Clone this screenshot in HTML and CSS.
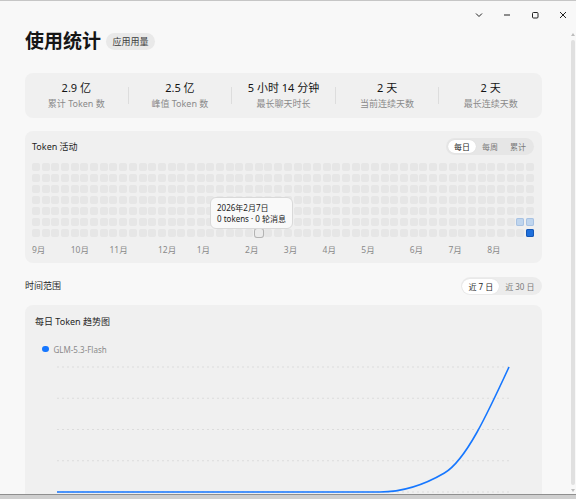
FILE: index.html
```html
<!DOCTYPE html>
<html lang="zh-CN">
<head>
<meta charset="utf-8">
<title>使用统计</title>
<link rel="stylesheet" href="styles.css">
</head>
<body>
<div class="window">
  <div class="titlebar">
    <span class="tb-btn"><svg viewBox="0 0 10 10"><polyline points="2,3.5 5,6.5 8,3.5"/></svg></span>
    <span class="tb-btn"><svg viewBox="0 0 10 10"><line x1="2" y1="5" x2="8" y2="5"/></svg></span>
    <span class="tb-btn"><svg viewBox="0 0 10 10"><rect x="2.5" y="2.5" width="5.5" height="5.5" rx="1"/></svg></span>
    <span class="tb-btn"><svg viewBox="0 0 10 10"><line x1="2" y1="2" x2="8" y2="8"/><line x1="8" y1="2" x2="2" y2="8"/></svg></span>
  </div>
  <div class="win-body">
    <main class="content">
      <header class="page-head">
        <h1 class="page-title">使用统计</h1>
        <span class="badge">应用用量</span>
      </header>

      <section class="stats">
        <div class="stat"><div class="stat-value">2.9 亿</div><div class="stat-label">累计 Token 数</div></div>
        <div class="stat-divider"></div>
        <div class="stat"><div class="stat-value">2.5 亿</div><div class="stat-label">峰值 Token 数</div></div>
        <div class="stat-divider"></div>
        <div class="stat"><div class="stat-value">5 小时 14 分钟</div><div class="stat-label">最长聊天时长</div></div>
        <div class="stat-divider"></div>
        <div class="stat"><div class="stat-value">2 天</div><div class="stat-label">当前连续天数</div></div>
        <div class="stat-divider"></div>
        <div class="stat"><div class="stat-value">2 天</div><div class="stat-label">最长连续天数</div></div>
      </section>

      <section class="card activity">
        <div class="card-head">
          <h2 class="card-title">Token 活动</h2>
          <div class="seg">
            <span class="seg-item active">每日</span>
            <span class="seg-item">每周</span>
            <span class="seg-item">累计</span>
          </div>
        </div>
        <div class="heatmap-wrap">
          <div class="heatmap" id="heatmap"></div>
          <div class="tooltip">
            <div>2026年2月7日</div>
            <div>0 tokens · 0 轮消息</div>
          </div>
        </div>
        <div class="months">
          <span style="grid-column:1">9月</span>
          <span style="grid-column:5">10月</span>
          <span style="grid-column:9">11月</span>
          <span style="grid-column:14">12月</span>
          <span style="grid-column:18">1月</span>
          <span style="grid-column:23">2月</span>
          <span style="grid-column:27">3月</span>
          <span style="grid-column:31">4月</span>
          <span style="grid-column:35">5月</span>
          <span style="grid-column:40">6月</span>
          <span style="grid-column:44">7月</span>
          <span style="grid-column:48">8月</span>
        </div>
      </section>

      <div class="range-row">
        <span class="range-label">时间范围</span>
        <div class="seg seg-range">
          <span class="seg-item active">近 7 日</span>
          <span class="seg-item">近 30 日</span>
        </div>
      </div>

      <section class="card chart-card">
        <h2 class="chart-title">每日 Token 趋势图</h2>
        <div class="legend"><span class="legend-dot"></span><span>GLM-5.3-Flash</span></div>
        <svg class="chart" viewBox="0 0 517 140" width="517" height="140">
          <g class="grid-lines">
            <line x1="32" y1="7" x2="484" y2="7"/>
            <line x1="32" y1="38.25" x2="484" y2="38.25"/>
            <line x1="32" y1="69.5" x2="484" y2="69.5"/>
            <line x1="32" y1="100.75" x2="484" y2="100.75"/>
            <line x1="32" y1="132" x2="484" y2="132"/>
          </g>
          <path class="series" d="M32 132 L354.86 132 C376.38 132 397.91 125.67 419.43 113 C440.95 100.33 462.48 53.66 484 7"/>
        </svg>
      </section>
    </main>
    <div class="scrollbar">
      <span class="sb-arrow sb-up"></span>
      <span class="sb-thumb"></span>
      <span class="sb-arrow sb-down"></span>
    </div>
  </div>
</div>
<script src="script.js"></script>
</body>
</html>
```

FILE: styles.css
```css
* { box-sizing: border-box; margin: 0; padding: 0; }

html, body {
  width: 576px;
  height: 499px;
  overflow: hidden;
}

body {
  background: #cfcfcf;
  font-family: "Noto Sans", "Noto Sans CJK SC", sans-serif;
  color: #1f1f1f;
}

.window {
  height: 495px;
  background: #f8f8f8;
  border-top: 1px solid #c6c6c6;
  border-bottom: 1px solid #8f8f8f;
  display: flex;
  flex-direction: column;
  overflow: hidden;
}

.titlebar {
  height: 28px;
  flex: none;
  display: flex;
  justify-content: flex-end;
  margin-right: -1px;
}

.tb-btn {
  width: 28px;
  height: 28px;
  display: flex;
  align-items: center;
  justify-content: center;
}

.tb-btn svg {
  width: 10px;
  height: 10px;
  fill: none;
  stroke: #222;
  stroke-width: 1;
}

.win-body {
  flex: 1;
  min-height: 0;
  display: flex;
}

.content {
  flex: 1;
  min-width: 0;
  padding: 0 28px 0 25px;
  overflow: hidden;
}

/* header */
.page-head {
  height: 24px;
  display: flex;
  align-items: center;
  gap: 5px;
}

.page-title {
  font-size: 19px;
  line-height: 24px;
  font-weight: 700;
  color: #161616;
}

.badge {
  height: 17px;
  line-height: 17px;
  padding: 0 6.5px;
  border-radius: 9px;
  background: #e9e9e9;
  font-size: 9px;
  color: #3a3a3a;
}

/* stats */
.stats {
  margin-top: 20px;
  height: 45px;
  background: #f0f0f0;
  border-radius: 8px;
  display: flex;
}

.stat {
  flex: 1;
  display: flex;
  flex-direction: column;
  align-items: center;
  padding-top: 8px;
}

.stat-value {
  font-size: 11px;
  line-height: 14px;
  font-weight: 400;
  color: #141414;
  white-space: nowrap;
}

.stat-label {
  margin-top: 3px;
  font-size: 9px;
  line-height: 12px;
  color: #8a8a8a;
  white-space: nowrap;
}

.stat-divider {
  width: 1px;
  height: 17px;
  align-self: center;
  background: #dddddd;
}

/* cards */
.card {
  background: #f0f0f0;
  border-radius: 8px;
}

.activity {
  margin-top: 13px;
  padding: 7px 8px 8px 7px;
}

.card-head {
  height: 17px;
  display: flex;
  align-items: center;
  justify-content: space-between;
}

.card-title {
  font-size: 9px;
  line-height: 12px;
  font-weight: 400;
  color: #1f1f1f;
}

.seg {
  display: flex;
  padding: 2px;
  background: #e6e6e6;
  border-radius: 9px;
}

.seg-item {
  height: 13px;
  line-height: 13px;
  padding: 0 6px;
  font-size: 8px;
  color: #7a7a7a;
  border-radius: 7px;
  white-space: nowrap;
}

.seg-item.active {
  background: #ffffff;
  color: #1f1f1f;
  box-shadow: 0 0 1px rgba(0, 0, 0, 0.12);
}

.heatmap-wrap {
  margin-top: 8px;
  position: relative;
}

.heatmap {
  display: grid;
  grid-template-columns: repeat(52, minmax(0, 1fr));
  grid-template-rows: repeat(7, 8px);
  gap: 3px 1.7px;
  grid-auto-flow: column;
}

.cell {
  border-radius: 2px;
  background: #e6e6e6;
}

.cell.l1 {
  background: #bfd5ee;
  box-shadow: inset 0 0 0 1px #a8c2e2;
}

.cell.l4 {
  background: #1e6fdc;
  box-shadow: inset 0 0 0 1px #1557b4;
}

.cell.hover {
  background: #ebebeb;
  box-shadow: 0 0 0 1px #b3b3b3;
}

.tooltip {
  position: absolute;
  left: 178px;
  top: 34px;
  padding: 4px 6px;
  background: #f9f9f9;
  border: 1px solid #d9d9d9;
  border-radius: 6px;
  font-size: 8px;
  line-height: 11px;
  color: #222;
  white-space: nowrap;
}

.months {
  margin-top: 7px;
  height: 11px;
  display: grid;
  grid-template-columns: repeat(52, minmax(0, 1fr));
  column-gap: 1.7px;
  font-size: 8.5px;
  line-height: 11px;
  color: #8a8a8a;
}

.months span {
  white-space: nowrap;
}

/* range row */
.range-row {
  margin-top: 14px;
  height: 18px;
  display: flex;
  align-items: center;
  justify-content: space-between;
}

.range-label {
  font-size: 9px;
  line-height: 12px;
  color: #2a2a2a;
}

.seg-range {
  padding: 1.5px;
  height: 18px;
  background: #ececec;
}

.seg-range .seg-item {
  height: 15px;
  line-height: 15px;
  border-radius: 8px;
}

/* chart */
.chart-card {
  margin-top: 10px;
  height: 220px;
}

.chart-title {
  padding: 11px 10px 0;
  font-size: 9px;
  line-height: 12px;
  font-weight: 400;
  color: #1f1f1f;
}

.legend {
  margin-top: 16px;
  padding-left: 17px;
  height: 10px;
  display: flex;
  align-items: center;
  gap: 5px;
  font-size: 8px;
  color: #8a8a8a;
}

.legend-dot {
  width: 6.5px;
  height: 6.5px;
  border-radius: 50%;
  background: #1677ff;
}

.chart {
  display: block;
  margin-top: 6px;
}

.grid-lines line {
  stroke: #dcdcdc;
  stroke-width: 1;
  stroke-dasharray: 2 3;
}

.series {
  fill: none;
  stroke: #1677ff;
  stroke-width: 1.6;
}

/* scrollbar */
.scrollbar {
  width: 6px;
  flex: none;
  display: flex;
  flex-direction: column;
  align-items: center;
  padding: 4px 0 2px;
}

.sb-arrow {
  width: 0;
  height: 0;
  border-left: 2.5px solid transparent;
  border-right: 2.5px solid transparent;
}

.sb-up { border-bottom: 3px solid #bdbdbd; }
.sb-down { border-top: 3px solid #bdbdbd; }

.sb-thumb {
  flex: 1;
  width: 4px;
  margin: 4px 0;
  border-radius: 2px;
  background: #e0e0e0;
}
```

FILE: script.js
```js
(function () {
  var hm = document.getElementById('heatmap');
  var cols = 52, rows = 7;
  var marks = { '50-5': 'l1', '51-5': 'l1', '51-6': 'l4', '23-6': 'hover' };
  for (var c = 0; c < cols; c++) {
    for (var r = 0; r < rows; r++) {
      var d = document.createElement('div');
      var m = marks[c + '-' + r];
      d.className = 'cell' + (m ? ' ' + m : '');
      hm.appendChild(d);
    }
  }
})();
```
